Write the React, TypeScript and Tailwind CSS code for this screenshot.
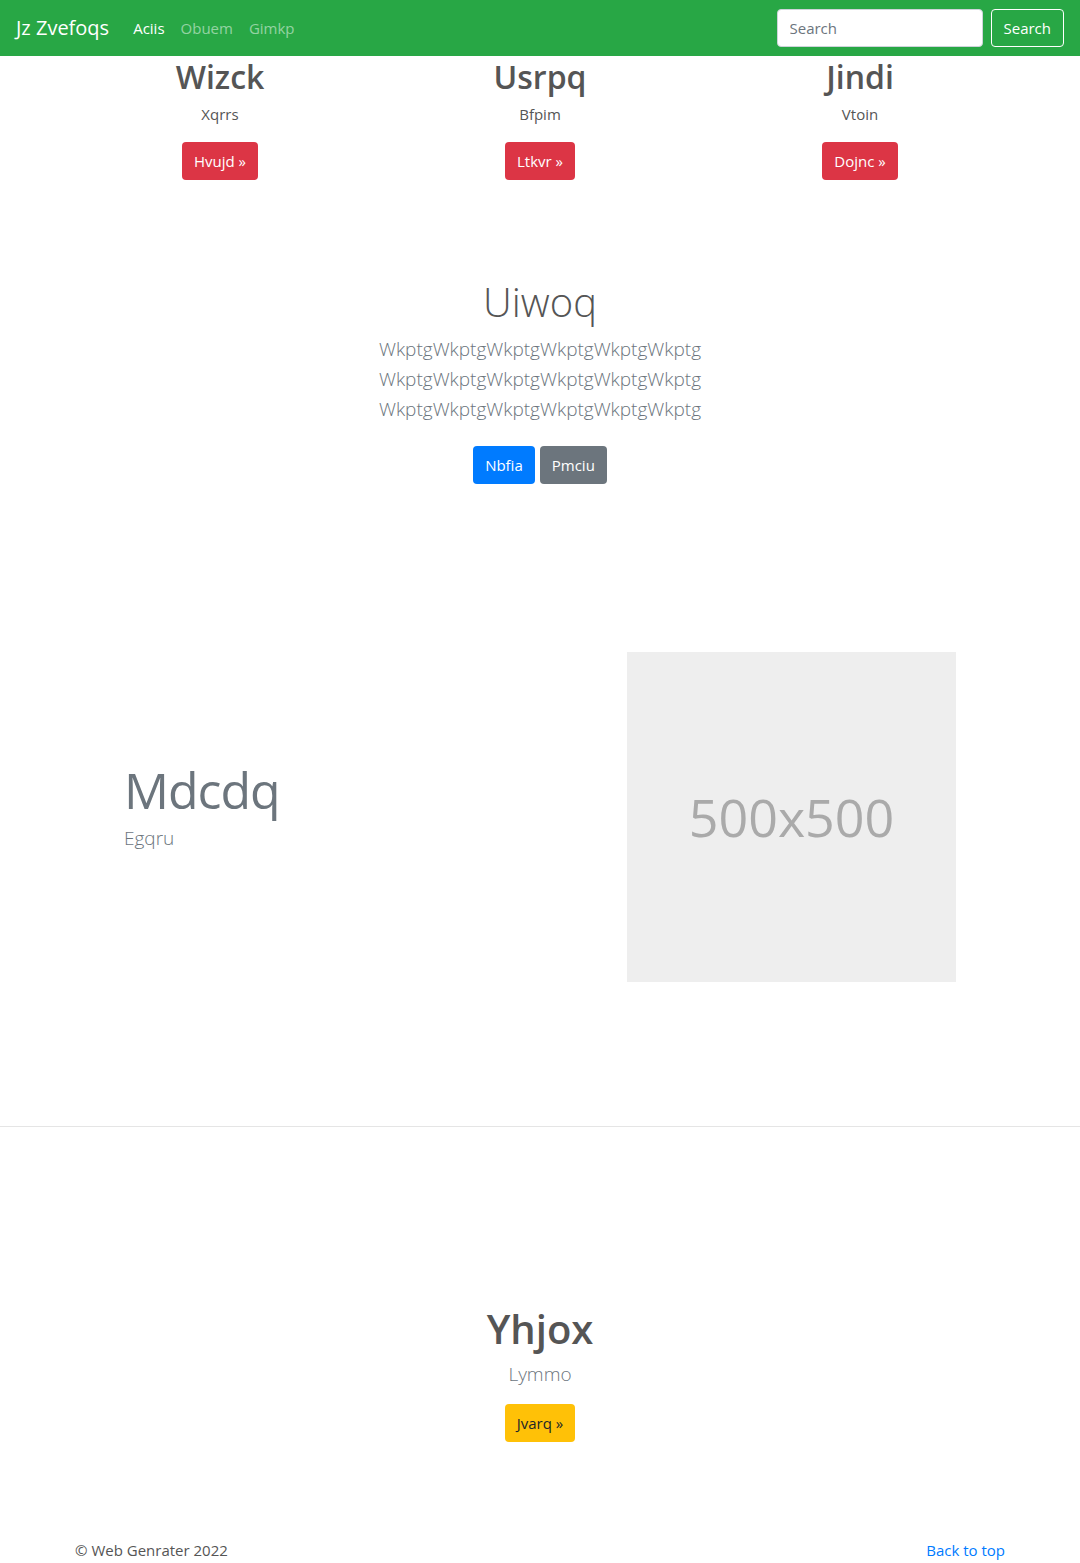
import React from "react";

const font = { fontFamily: '"Open Sans", "Noto Sans", Arial, sans-serif' };

function Column({ title, sub, btn }: { title: string; sub: string; btn: string }) {
  return (
    <div className="flex flex-col items-center">
      <h2 className="text-[32px] leading-[38px] font-semibold text-[#555] mt-[2px] mb-[6px]">{title}</h2>
      <p className="text-[15px] leading-6 text-[#555] mb-4">{sub}</p>
      <button className="h-[38px] px-3 rounded bg-[#dc3545] text-white text-[15px]">{btn} »</button>
    </div>
  );
}

export default function App() {
  return (
    <div className="bg-white min-h-[1563px] w-[1080px]" style={font}>
      {/* NAVBAR */}
      <nav className="h-14 bg-[#28a745] flex items-center justify-between px-4">
        <div className="flex items-center">
          <span className="text-white text-[20px] mr-4">Jz Zvefoqs</span>
          <div className="flex text-[15px]">
            <span className="px-2 text-white">Aciis</span>
            <span className="px-2 text-white/50">Obuem</span>
            <span className="px-2 text-white/50">Gimkp</span>
          </div>
        </div>
        <div className="flex items-center gap-2">
          <input
            placeholder="Search"
            className="w-[206px] h-[38px] rounded bg-white border border-[#ced4da] px-3 text-[15px] placeholder:text-[#6c757d] outline-none"
          />
          <button className="h-[38px] px-3 rounded border border-white text-white text-[15px]">Search</button>
        </div>
      </nav>

      {/* THREE COLUMNS */}
      <div className="w-[960px] mx-auto grid grid-cols-3">
        <Column title="Wizck" sub="Xqrrs" btn="Hvujd" />
        <Column title="Usrpq" sub="Bfpim" btn="Ltkvr" />
        <Column title="Jindi" sub="Vtoin" btn="Dojnc" />
      </div>

      {/* HERO */}
      <section className="mt-[98px] flex flex-col items-center text-center">
        <h1 className="text-[40px] leading-[48px] font-light text-[#555] mb-2">Uiwoq</h1>
        <div className="text-[19px] leading-[30px] font-light text-[#6c757d] mb-[22px]">
          <p>WkptgWkptgWkptgWkptgWkptgWkptg</p>
          <p>WkptgWkptgWkptgWkptgWkptgWkptg</p>
          <p>WkptgWkptgWkptgWkptgWkptgWkptg</p>
        </div>
        <div className="flex gap-[5px]">
          <button className="h-[38px] px-3 rounded bg-[#007bff] text-white text-[15px]">Nbfia</button>
          <button className="h-[38px] px-3 rounded bg-[#6c757d] text-white text-[15px]">Pmciu</button>
        </div>
      </section>

      {/* FEATURETTE */}
      <section className="mt-[168px] flex items-center">
        <div className="w-[627px] pl-[124px] pb-[16px]">
          <h2 className="text-[50px] leading-[50px] font-normal tracking-[-1px] text-[#6c757d] mb-[8px]">Mdcdq</h2>
          <p className="text-[19px] leading-[30px] font-light text-[#6c757d]">Egqru</p>
        </div>
        <div className="w-[329px] h-[330px] bg-[#eee] flex items-center justify-center">
          <span className="text-[52px] text-[#aaa]">500x500</span>
        </div>
      </section>

      <hr className="mt-[144px] border-t border-black/10" />

      {/* BOTTOM */}
      <section className="mt-[178px] flex flex-col items-center">
        <h2 className="text-[40px] leading-[48px] font-semibold text-[#555] mb-[6px]">Yhjox</h2>
        <p className="text-[19px] leading-[30px] font-light text-[#6c757d] mb-[15px]">Lymmo</p>
        <button className="h-[38px] px-3 rounded bg-[#ffc107] text-[#212529] text-[15px]">Jvarq »</button>
      </section>

      {/* FOOTER */}
      <footer className="mt-[96px] w-[930px] mx-auto flex justify-between text-[15px] leading-6">
        <p className="text-[#555]">© Web Genrater 2022</p>
        <span className="text-[#007bff]">Back to top</span>
      </footer>
    </div>
  );
}
